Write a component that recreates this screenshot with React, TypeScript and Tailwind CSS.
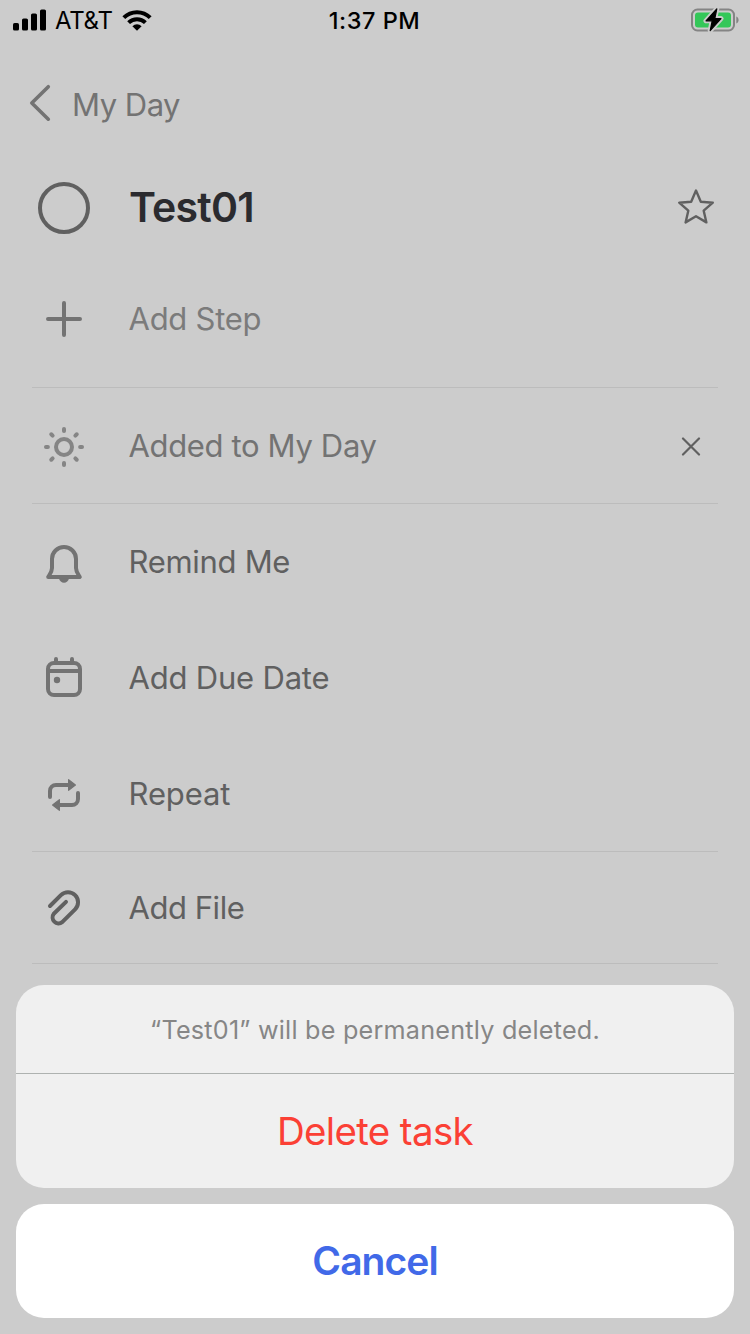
import type { ReactNode } from "react";

function StatusBar() {
  return (
    <header className="flex h-10 items-center justify-between pl-[13px] pr-[11px] text-black">
      <div className="flex w-[200px] items-center">
        <svg className="h-[22px] w-[34px]" viewBox="0 0 34 22" fill="currentColor">
          <rect x="0" y="14" width="6" height="7.500" rx="1.6" />
          <rect x="9" y="9.500" width="6" height="12" rx="1.6" />
          <rect x="18" y="4.500" width="6" height="17" rx="1.6" />
          <rect x="27" y="0.500" width="6" height="21" rx="1.6" />
        </svg>
        <span className="ml-[8px] w-[60px] pt-px text-[24px] leading-none tracking-[-0.3px]">AT&amp;T</span>
        <svg className="ml-[7px] h-[22px] w-[30px]" viewBox="0 0 30 22" fill="none" stroke="currentColor" strokeWidth="4">
          <path d="M1.8 8.6a18.7 18.7 0 0 1 26.4 0" />
          <path d="M6.6 13.6a12 12 0 0 1 16.8 0" />
          <path d="M10.4 17.2a6.700 6.700 0 0 1 9.200 0L15 21.800z" fill="currentColor" stroke="none" />
        </svg>
      </div>
      <span className="mr-[3px] pt-[2px] text-[23.5px] font-medium leading-none tracking-[0.5px]">1:37 PM</span>
      <div className="flex w-[200px] justify-end">
        <svg className="h-[26px] w-[50px]" viewBox="0 0 50 26" fill="none">
          <rect x="3" y="2.500" width="42" height="21" rx="5.5" stroke="#848484" strokeWidth="2" />
          <rect x="6" y="5.500" width="36" height="15" rx="3" fill="#34c759" />
          <path d="M47.3 9.500v7c1.6-.6 2.3-2 2.3-3.500s-.7-2.900-2.300-3.500z" fill="#848484" />
          <g strokeLinejoin="round">
            <path d="M27.800 1.800 17 13.800H23.200L21.200 23.600 32 11.600H25.800z" stroke="#cccccc" strokeWidth="5" />
            <path d="M27.800 1.800 17 13.800H23.200L21.200 23.600 32 11.600H25.800z" fill="#000" stroke="#000" strokeWidth="1.2" />
          </g>
        </svg>
      </div>
    </header>
  );
}

function Icon({ children, className }: { children: ReactNode; className: string }) {
  return (
    <span className={`flex w-16 shrink-0 justify-center ${className}`}>
      <svg
        className="h-12 w-12"
        viewBox="0 0 48 48"
        fill="none"
        stroke="currentColor"
        strokeWidth="4"
        strokeLinecap="round"
        strokeLinejoin="round"
      >
        {children}
      </svg>
    </span>
  );
}

function SunIcon() {
  return (
    <Icon className="text-[#858585]">
      <circle cx="24" cy="24" r="8" />
      {[0, 45, 90, 135, 180, 225, 270, 315].map((angle) => (
        <path key={angle} d="M24 6v1.900" transform={`rotate(${angle} 24 24)`} />
      ))}
    </Icon>
  );
}

function Row({
  icon,
  label,
  className,
  textClass,
  action,
}: {
  icon: ReactNode;
  label: string;
  className: string;
  textClass: string;
  action?: ReactNode;
}) {
  return (
    <li className={`flex items-center border-[#bcbcbc] ${className}`}>
      {icon}
      <span className={`ml-[32.5px] flex-1 text-[31px] leading-none ${textClass}`}>{label}</span>
      {action}
    </li>
  );
}

export default function App() {
  return (
    <div className="relative h-[1334px] w-[750px] overflow-hidden bg-[#cccccc] font-['Inter',sans-serif]">
      <StatusBar />
      <nav className="flex h-32 items-center pl-7 text-[#737373]">
        <svg className="h-10 w-6" viewBox="0 0 24 40" fill="none" stroke="currentColor" strokeWidth="3.6" strokeLinecap="round" strokeLinejoin="round">
          <path d="M20.300 2.700 3.800 19 20.300 35.200" />
        </svg>
        <span className="ml-5 pt-px text-[31px] leading-none tracking-[-0.5px]">My Day</span>
      </nav>

      <div className="mx-8 flex h-20 items-center">
        <div className="flex w-16 justify-center">
          <span className="size-[52px] rounded-full border-4 border-[#606060]" />
        </div>
        <h1 className="ml-[33px] flex-1 pb-[2px] text-[41px] font-semibold leading-none tracking-[-0.8px] text-[#2b2b2f]">Test01</h1>
        <svg className="mb-[2px] h-10 w-11" viewBox="0 0 44 40" fill="none" stroke="#606060" strokeWidth="2.4" strokeLinejoin="round">
          <path d="M22 3.500 26.800 14.700 38.800 15.700 29.700 23.700 32.400 35.400 22 29.300 11.600 35.400 14.300 23.700 5.200 15.700 17.200 14.700z" />
        </svg>
      </div>

      <ul className="mx-8">
        <Row
          className="h-[140px] border-b pt-[3px]"
          label="Add Step"
          textClass="pb-px text-[#7b7b7b] tracking-[-0.25px]"
          icon={
            <Icon className="text-[#737373]">
              <path d="M24 8v32M8 24h32" />
            </Icon>
          }
        />
        <Row
          className="h-[116px] border-b pt-[2px]"
          label="Added to My Day"
          textClass="pb-[2px] text-[#737373] tracking-[-0.35px]"
          icon={<SunIcon />}
          action={
            <svg className="mr-[17px] size-5" viewBox="0 0 20 20" stroke="#606060" strokeWidth="2.200" strokeLinecap="round">
              <path d="M2 1.500l16 16M18 1.500 2 17.500" />
            </svg>
          }
        />
        <Row
          className="h-[116px]"
          label="Remind Me"
          textClass="pb-px text-[#606060] tracking-[-0.3px]"
          icon={
            <Icon className="text-[#737373]">
              <path d="M12 21a12 12 0 0 1 24 0v9c0 3.500 1.800 5.500 3.800 9H8.200c2-3.500 3.800-5.500 3.800-9z" />
              <path d="M19 40.500c.6 2.700 2.600 4.200 5 4.200s4.400-1.500 5-4.200z" fill="currentColor" stroke="none" />
            </Icon>
          }
        />
        <Row
          className="h-[116px]"
          label="Add Due Date"
          textClass="pb-px text-[#606060] tracking-[-0.2px]"
          icon={
            <Icon className="text-[#737373]">
              <rect x="8" y="9" width="32" height="32" rx="6" />
              <path d="M16 5v3M32 5v3M9 17h30" />
              <circle cx="17" cy="26" r="3.200" fill="currentColor" stroke="none" />
            </Icon>
          }
        />
        <Row
          className="h-[116px] border-b"
          label="Repeat"
          textClass="pb-px text-[#606060] tracking-[-0.1px]"
          icon={
            <Icon className="text-[#737373]">
              <path d="M10 27V21a6 6 0 0 1 6-6h13M38 23v6a6 6 0 0 1-6 6H19" />
              <path d="M28.600 9.700v10.600l6.800-5.300zM19.400 29.700v10.600l-6.800-5.300z" fill="currentColor" strokeWidth="1.200" />
            </Icon>
          }
        />
        <Row
          className="h-[112px] border-b"
          label="Add File"
          textClass="pb-px text-[#606060] tracking-[-0.45px]"
          icon={
            <Icon className="text-[#606060]">
              <path d="M10 22 20.900 11.100a10 10 0 0 1 14.200 14.200L22.200 38.200a6 6 0 0 1-8.400-8.400L26 17.900" />
            </Icon>
          }
        />
      </ul>

      <div className="absolute inset-x-4 bottom-4 flex flex-col gap-4 text-center" role="dialog">
        <div className="flex h-[203px] flex-col overflow-hidden rounded-[28px] bg-[#f0f0f0]">
          <p className="flex h-[89px] items-center justify-center border-b border-[#aeb2b0] pt-[4px] text-[25.2px] leading-none tracking-[0.22px] text-[#868686]">
            “Test01” will be permanently deleted.
          </p>
          <button className="flex-1 text-[38.5px] leading-none tracking-[-0.65px] text-[#fb4035]">Delete task</button>
        </div>
        <button className="h-[114px] rounded-[28px] bg-white pb-px text-[39px] font-semibold leading-none tracking-[-0.95px] text-[#4169e8]">
          Cancel
        </button>
      </div>
    </div>
  );
}
